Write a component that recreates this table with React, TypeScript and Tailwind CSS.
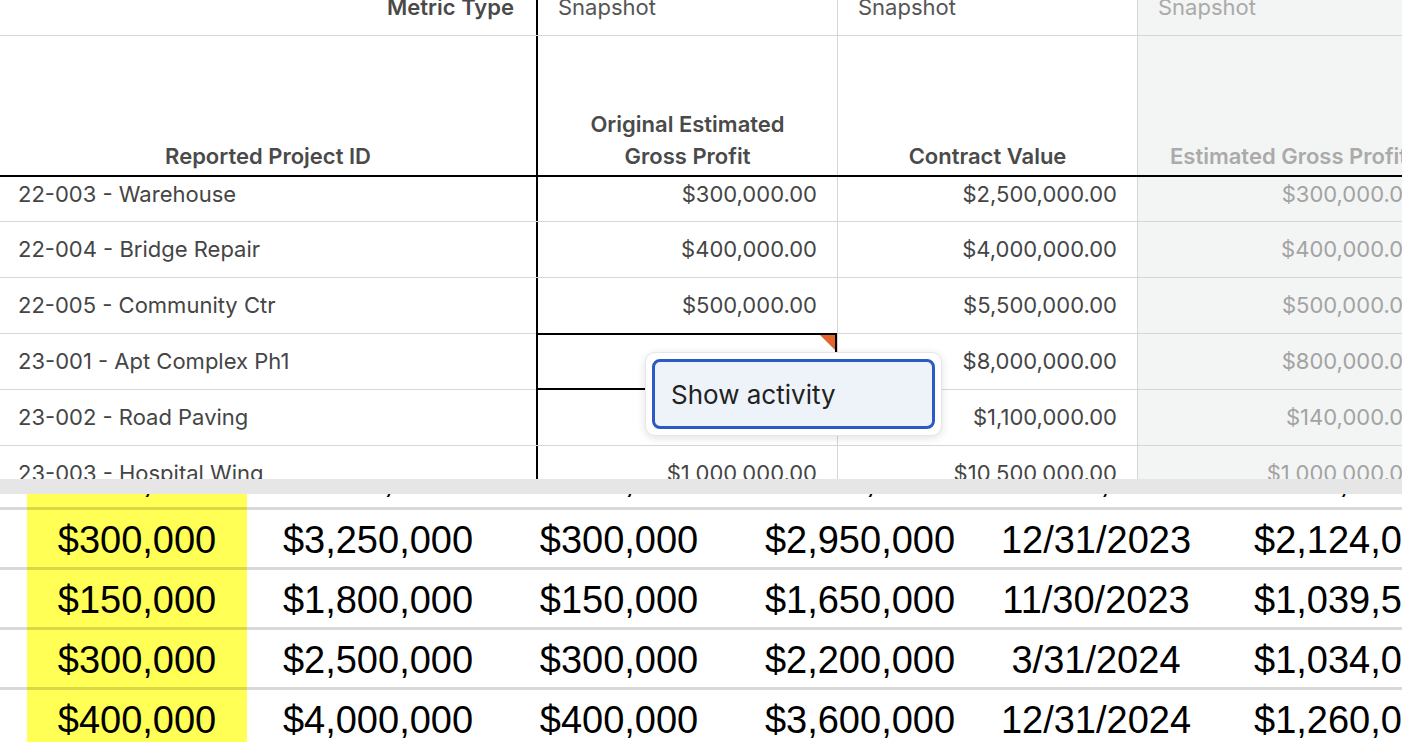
const rows = [
  ["22-003 - Warehouse", "$300,000.00", "$2,500,000.00", "$300,000.00"],
  ["22-004 - Bridge Repair", "$400,000.00", "$4,000,000.00", "$400,000.00"],
  ["22-005 - Community Ctr", "$500,000.00", "$5,500,000.00", "$500,000.00"],
  ["23-001 - Apt Complex Ph1", "", "$8,000,000.00", "$800,000.00"],
  ["23-002 - Road Paving", "", "$1,100,000.00", "$140,000.00"],
  ["23-003 - Hospital Wing", "$1,000,000.00", "$10,500,000.00", "$1,000,000.00"],
];

const sheetRows = [
  ["$250,000", "$275,000", "$250,000", "$250,000", "$112,000", "$161,000"],
  ["$300,000", "$3,250,000", "$300,000", "$2,950,000", "12/31/2023", "$2,124,000"],
  ["$150,000", "$1,800,000", "$150,000", "$1,650,000", "11/30/2023", "$1,039,500"],
  ["$300,000", "$2,500,000", "$300,000", "$2,200,000", "3/31/2024", "$1,034,000"],
  ["$400,000", "$4,000,000", "$400,000", "$3,600,000", "12/31/2024", "$1,260,000"],
];

function DataRow({ row, first, selected }: { row: string[]; first?: boolean; selected?: boolean }) {
  const h = first ? "h-[44px] pb-[10px]" : "h-[55px]";
  return (
    <div className="flex border-b border-[#d6d6d6]">
      <div className={`w-[536px] ${h} flex items-center pl-[18px] text-[#454545]`}>{row[0]}</div>
      <div className={`relative w-[301px] ${h} border-l-2 border-black flex items-center justify-end pr-5 text-[#454545]`}>
        {row[1]}
        {selected && (
          <div className="absolute -top-px -left-[2px] right-0 -bottom-px border-2 border-black">
            <div className="absolute top-0 right-0 w-0 h-0 border-l-[15px] border-l-transparent border-t-[15px] border-t-[#e0662e]" />
          </div>
        )}
      </div>
      <div className={`w-[300px] ${h} border-l border-[#d6d6d6] flex items-center justify-end pr-5 text-[#454545]`}>{row[2]}</div>
      <div className={`w-[300px] ${h} border-l border-[#d6d6d6] bg-[#f3f4f4] flex items-center justify-end pr-5 text-[#a3a3a3]`}>{row[3]}</div>
    </div>
  );
}

export default function App() {
  return (
    <div className="w-[1402px] h-[742px] overflow-hidden bg-white">
      <div className="relative h-[479px] overflow-hidden font-['Inter',sans-serif] text-[22px]">
        <div className="w-[1440px]">
          <div className="flex -mt-[20px] border-b border-[#d6d6d6]">
            <div className="w-[536px] h-[55px] flex items-center justify-end pr-[22px] font-semibold text-[#4a4a4a]">Metric Type</div>
            <div className="w-[301px] h-[55px] border-l-2 border-black flex items-center pl-[20px] text-[#555]">Snapshot</div>
            <div className="w-[300px] h-[55px] border-l border-[#d6d6d6] flex items-center pl-[20px] text-[#555]">Snapshot</div>
            <div className="w-[300px] h-[55px] border-l border-[#d6d6d6] bg-[#f3f4f4] flex items-center pl-[20px] text-[#aaa]">Snapshot</div>
          </div>
          <div className="flex border-b-2 border-black font-semibold leading-[32px]">
            <div className="w-[536px] h-[139px] flex items-end justify-center pb-[3px] text-[#4a4a4a]">Reported Project ID</div>
            <div className="w-[301px] h-[139px] border-l-2 border-black flex items-end justify-center text-center pb-[3px] text-[#4a4a4a]">
              Original Estimated
              <br />
              Gross Profit
            </div>
            <div className="w-[300px] h-[139px] border-l border-[#d6d6d6] flex items-end justify-center pb-[3px] text-[#4a4a4a]">Contract Value</div>
            <div className="w-[300px] h-[139px] border-l border-[#d6d6d6] bg-[#f3f4f4] flex items-end justify-start pl-[32px] pb-[3px] text-[#aaa] whitespace-nowrap">Estimated Gross Profit</div>
          </div>
          {rows.map((r, i) => (
            <DataRow key={i} row={r} first={i === 0} selected={i === 3} />
          ))}
        </div>
        <div className="absolute left-[645px] top-[352px] w-[297px] h-[84px] bg-white rounded-[10px] border border-[#e6e6e6] shadow-[0_2px_8px_rgba(0,0,0,0.12)] p-[6px]">
          <div className="h-full rounded-[8px] border-[3px] border-[#2a5bc5] bg-[#eef3f9] flex items-center pl-[16px] text-[26px] text-[#222]">
            Show activity
          </div>
        </div>
      </div>
      <div className="h-[15px] bg-[#e6e6e6]" />
      <div className="h-[248px] overflow-hidden font-['Liberation_Sans',Arial,sans-serif] text-[38px] text-black">
        {sheetRows.map((r, i) => (
          <div key={i} className={`grid grid-cols-[27px_220px_262px_220px_262px_210px_1fr] ${i === 0 ? "-mt-[47px]" : ""}`}>
            <div className={`h-[60px] ${i > 0 ? "border-t-[3px] border-black/15" : ""}`} />
            <div className={`h-[60px] pt-[4px] bg-[#ffff55] flex items-center justify-center ${i > 0 ? "border-t-[3px] border-black/15" : ""}`}>{r[0]}</div>
            <div className={`h-[60px] pt-[4px] flex items-center justify-center ${i > 0 ? "border-t-[3px] border-black/15" : ""}`}>{r[1]}</div>
            <div className={`h-[60px] pt-[4px] flex items-center justify-center ${i > 0 ? "border-t-[3px] border-black/15" : ""}`}>{r[2]}</div>
            <div className={`h-[60px] pt-[4px] flex items-center justify-center ${i > 0 ? "border-t-[3px] border-black/15" : ""}`}>{r[3]}</div>
            <div className={`h-[60px] pt-[4px] flex items-center justify-center ${i > 0 ? "border-t-[3px] border-black/15" : ""}`}>{r[4]}</div>
            <div className={`h-[60px] pt-[4px] flex items-center pl-[53px] whitespace-nowrap ${i > 0 ? "border-t-[3px] border-black/15" : ""}`}>{r[5]}</div>
          </div>
        ))}
      </div>
    </div>
  );
}
